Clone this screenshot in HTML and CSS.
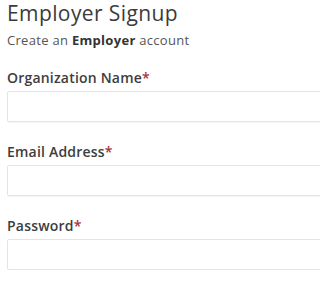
FILE: index.html
```html
<!DOCTYPE html>
<html>
<head>
<meta charset="utf-8">
<link rel="stylesheet" href="styles.css">
</head>
<body>
<div class="page">
  <h1 class="title">Employer Signup</h1>
  <p class="subtitle">Create an <strong>Employer</strong> account</p>
  <form class="form">
    <div class="field">
      <label class="label">Organization Name<span class="req">*</span></label>
      <input class="input" type="text">
    </div>
    <div class="field">
      <label class="label">Email Address<span class="req">*</span></label>
      <input class="input" type="email">
    </div>
    <div class="field">
      <label class="label">Password<span class="req">*</span></label>
      <input class="input" type="password">
    </div>
  </form>
</div>
</body>
</html>
```
FILE: styles.css
```css
html, body {
  margin: 0;
  padding: 0;
  background: #fff;
  overflow: hidden;
}
.page {
  font-family: "Open Sans", "Lato", sans-serif;
  padding: 0 0 0 7px;
  overflow: hidden;
}
.title {
  margin: 0;
  font-size: 21px;
  line-height: 26px;
  font-weight: 500;
  color: #3b3b3b;
  letter-spacing: 0.4px;
}
.subtitle {
  margin: 6px 0 0 0;
  font-size: 13px;
  line-height: 16px;
  color: #555;
  letter-spacing: 0.3px;
}
.subtitle strong {
  color: #333;
  font-weight: 700;
}
.form {
  display: flex;
  flex-direction: column;
  gap: 22px;
  margin-top: 22px;
}
.field {
  display: flex;
  flex-direction: column;
  gap: 5px;
}
.label {
  font-size: 14px;
  line-height: 16px;
  font-weight: 600;
  color: #3d3d3d;
  letter-spacing: 0.2px;
}
.req {
  color: #a8323c;
}
.input {
  box-sizing: border-box;
  height: 31px;
  width: calc(100% + 20px);
  margin: 0;
  border: 1px solid #e4e4e4;
  border-radius: 2px;
  box-shadow: 0 1px 1px rgba(0,0,0,0.04);
  background: #fff;
  outline: none;
}
```
